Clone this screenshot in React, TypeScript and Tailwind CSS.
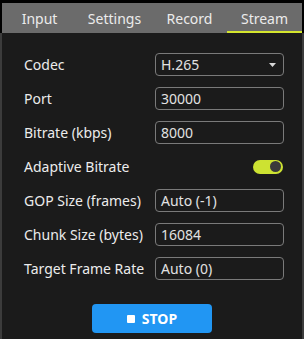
import React from 'react';

const tabs = ['Input', 'Settings', 'Record', 'Stream'];

const rows: { label: string; value?: string; kind: 'select' | 'input' | 'toggle' }[] = [
  { label: 'Codec', value: 'H.265', kind: 'select' },
  { label: 'Port', value: '30000', kind: 'input' },
  { label: 'Bitrate (kbps)', value: '8000', kind: 'input' },
  { label: 'Adaptive Bitrate', kind: 'toggle' },
  { label: 'GOP Size (frames)', value: 'Auto (-1)', kind: 'input' },
  { label: 'Chunk Size (bytes)', value: '16084', kind: 'input' },
  { label: 'Target Frame Rate', value: 'Auto (0)', kind: 'input' },
];

export default function App() {
  return (
    <div
      className="w-[304px] h-[339px] bg-black pt-[3px] flex flex-col"
      style={{ fontFamily: '"Noto Sans", "Open Sans", sans-serif' }}
    >
      <div className="mx-[2px] h-[30px] bg-[#6b6b6b] grid grid-cols-4">
        {tabs.map((t) => (
          <div
            key={t}
            className={
              'flex items-center justify-center text-[14px] text-[#ececec] ' +
              (t === 'Stream' ? 'border-b-[2px] border-[#d4e62e] pt-[2px]' : '')
            }
          >
            {t}
          </div>
        ))}
      </div>
      <div className="flex-1 bg-[#1b1b1b] border-x-[2px] border-[#3c3c3c] flex flex-col pt-[20px] pl-[22px] pr-[18px]">
        <div className="flex flex-col gap-[11px]">
          {rows.map((r) => (
            <div key={r.label} className="h-[23px] flex items-center">
              <span className="w-[131px] text-[14px] text-[#ececec] whitespace-nowrap">{r.label}</span>
              {r.kind === 'toggle' ? (
                <div className="ml-auto mr-[1px] w-[30px] h-[14px] rounded-full bg-[#cde232] flex items-center justify-end pr-[2px]">
                  <div className="w-[11px] h-[11px] rounded-full bg-[#3a3a3a]" />
                </div>
              ) : (
                <div className="w-[129px] h-[23px] border border-[#7a7a7a] rounded-[4px] flex items-center px-[5px] text-[14px] text-[#e2e2e2]">
                  <span>{r.value}</span>
                  {r.kind === 'select' && (
                    <svg width="7" height="4" viewBox="0 0 7 4" className="ml-auto mr-[2px]">
                      <path d="M0 0h7L3.5 4z" fill="#d8d8d8" />
                    </svg>
                  )}
                </div>
              )}
            </div>
          ))}
        </div>
        <div className="flex justify-center mt-[24px] pr-[4px]">
          <button className="w-[120px] h-[29px] rounded-[4px] bg-[#2196f3] text-white text-[14px] font-bold flex items-center justify-center gap-[7px]">
            <span className="w-[8px] h-[8px] rounded-[1px] bg-white" />
            STOP
          </button>
        </div>
      </div>
    </div>
  );
}
